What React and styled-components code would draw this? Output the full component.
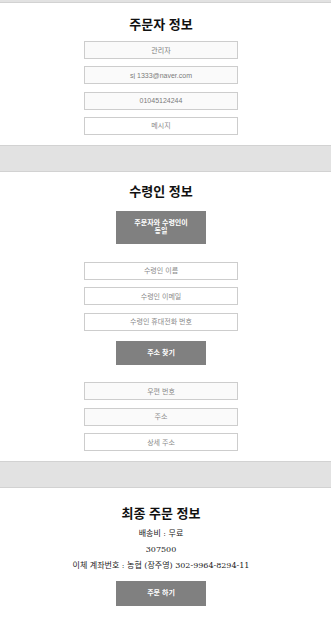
import React from "react";
import styled, { createGlobalStyle } from "styled-components";

const Global = createGlobalStyle`
  html, body { margin: 0; padding: 0; background: #fff; }
  body { font-family: "DejaVu Serif", "Noto Sans CJK KR", serif; }
  * { box-sizing: border-box; }
`;

const Band = styled.div`
  height: ${(p) => p.$h}px;
  background: #e2e2e2;
  border-top: ${(p) => (p.$noTop ? "none" : "1px solid #d2d2d2")};
  border-bottom: 1px solid #d2d2d2;
`;

const Section = styled.section`
  display: flex;
  flex-direction: column;
  align-items: center;
  padding: ${(p) => p.$top}px 9px ${(p) => p.$bottom}px 0;
`;

const Title = styled.h2`
  margin: 0;
  font-family: "Liberation Sans", "Noto Sans CJK KR", sans-serif;
  font-size: 13px;
  line-height: 16px;
  font-weight: 700;
  color: #111;
`;

const Fields = styled.div`
  display: flex;
  flex-direction: column;
  gap: ${(p) => p.$gap}px;
  margin-top: ${(p) => p.$mt}px;
`;

const Field = styled.input`
  display: block;
  width: 154px;
  height: 18px;
  margin: 0;
  padding: 0 4px;
  border: 1px solid #cdcdcd;
  background: ${(p) => (p.readOnly ? "#fafafa" : "#fff")};
  font-family: "Liberation Sans", "Noto Sans CJK KR", sans-serif;
  font-size: 7px;
  color: #7a7a7a;
  text-align: center;
  outline: none;
  &::placeholder { color: #8a8a8a; }
`;

const Button = styled.button`
  display: block;
  width: 90px;
  margin: ${(p) => p.$mt}px 0 0;
  padding: 8px 16px;
  border: none;
  background: #808080;
  color: #fff;
  font-family: "Liberation Sans", "Noto Sans CJK KR", sans-serif;
  font-size: 7px;
  line-height: 1.2;
  font-weight: 700;
  text-align: center;
  cursor: pointer;
`;

const Info = styled.p`
  margin: ${(p) => p.$mt || 0}px 0 0;
  font-size: 8px;
  line-height: 16px;
  color: #222;
  text-align: center;
`;

export default function App() {
  return (
    <>
      <Global />
      <Band $h={3} $noTop />

      <Section $top={14} $bottom={10}>
        <Title>주문자 정보</Title>
        <Fields $gap={7.33} $mt={8}>
          <Field readOnly value="관리자" />
          <Field readOnly value="sj 1333@naver.com" />
          <Field readOnly value="01045124244" />
          <Field placeholder="메시지" />
        </Fields>
      </Section>

      <Band $h={27} />

      <Section $top={12} $bottom={10}>
        <Title>수령인 정보</Title>
        <Button $mt={11}>주문자와 수령인이 동일</Button>
        <Fields $gap={7.5} $mt={18}>
          <Field placeholder="수령인 이름" />
          <Field placeholder="수령인 이메일" />
          <Field placeholder="수령인 휴대전화 번호" />
        </Fields>
        <Button $mt={10}>주소 찾기</Button>
        <Fields $gap={7.66} $mt={17}>
          <Field readOnly placeholder="우편 번호" />
          <Field readOnly placeholder="주소" />
          <Field placeholder="상세 주소" />
        </Fields>
      </Section>

      <Band $h={27} />

      <Section $top={18} $bottom={18}>
        <Title>최종 주문 정보</Title>
        <Info $mt={4}>배송비 : 무료</Info>
        <Info>307500</Info>
        <Info>이체 계좌번호 : 농협 (장주영) 302-9964-8294-11</Info>
        <Button $mt={7}>주문 하기</Button>
      </Section>
    </>
  );
}
